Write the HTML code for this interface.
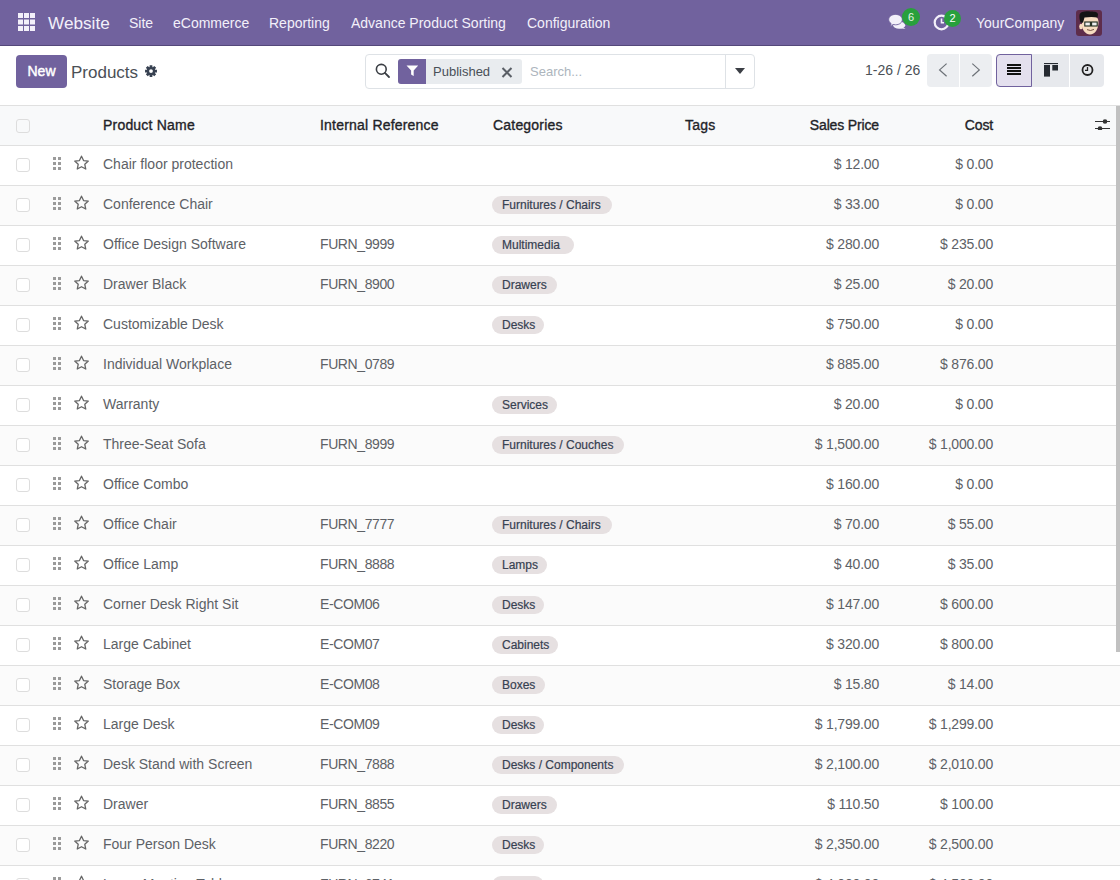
<!DOCTYPE html>
<html><head><meta charset="utf-8">
<style>
*{box-sizing:border-box;margin:0;padding:0}
html,body{width:1120px;height:880px;overflow:hidden;background:#fff;font-family:"Liberation Sans",sans-serif;}
.abs{position:absolute}
#nav{position:absolute;left:0;top:0;width:1120px;height:46px;background:#71629e;border-bottom:1px solid #54487a}
#nav .t{position:absolute;color:#f3f0fa;font-size:14px;line-height:16px;top:15px;white-space:nowrap}
#cp{position:absolute;left:0;top:46px;width:1120px;height:59px;background:#fff}
#list{position:absolute;left:0;top:105px;width:1120px;height:775px}
.row{position:absolute;left:0;width:1120px;height:41px;border-top:1px solid #e0e0e0}
.row .c{position:absolute;top:-1px;line-height:39px;font-size:14px;color:#5d6166;white-space:nowrap}
.hd{background:#f8f9fa}
.hd .c{top:0}
.hd .c{color:#1f2328;-webkit-text-stroke:0.35px #1f2328;letter-spacing:0.2px}
.r{text-align:right;letter-spacing:-0.2px}
.ref{letter-spacing:-0.4px}
.hd .r{letter-spacing:-0.15px}
.odd{background:#fbfbfb}
.cb{position:absolute;left:16px;top:12px;width:14px;height:14px;border:1px solid #dddddd;border-radius:3px;background:#fff}
.hd .cb{top:13px;background:transparent}
.hdl{position:absolute;left:53px;top:11px}
.star{position:absolute;left:73px;top:9.3px}
.badge{position:absolute;top:10px;height:18px;line-height:19px;font-size:12px;padding:0 0 0 10px;border-radius:9px;background:#e6e0e1;color:#374151;-webkit-text-stroke:0.2px #374151;white-space:nowrap}
#sb{position:absolute;left:1116px;top:106px;width:4px;height:546px;background:#c1c1c1}
</style></head>
<body>
<div id="nav">
  <svg class="abs" style="left:18px;top:13px" width="17" height="18" viewBox="0 0 17 18">
    <g fill="#f3f0fa">
      <rect x="0" y="0" width="5" height="5"/><rect x="6" y="0" width="5" height="5"/><rect x="12" y="0" width="5" height="5"/>
      <rect x="0" y="6.5" width="5" height="5"/><rect x="6" y="6.5" width="5" height="5"/><rect x="12" y="6.5" width="5" height="5"/>
      <rect x="0" y="13" width="5" height="5"/><rect x="6" y="13" width="5" height="5"/><rect x="12" y="13" width="5" height="5"/>
    </g>
  </svg>
  <div class="t" style="left:48px;top:13px;font-size:17.2px;line-height:20px">Website</div>
  <div class="t" style="left:129px">Site</div>
  <div class="t" style="left:173px">eCommerce</div>
  <div class="t" style="left:269px">Reporting</div>
  <div class="t" style="left:351px">Advance Product Sorting</div>
  <div class="t" style="left:527px">Configuration</div>
  <!-- chat icon -->
  <svg class="abs" style="left:884px;top:6px" width="24" height="26" viewBox="0 0 24 26">
    <g fill="#f3f0fa">
      <ellipse cx="15.2" cy="19.2" rx="6" ry="3.6"/>
      <path d="M18 20.5 L21.5 23 L15 22 Z"/>
    </g>
    <g fill="#f3f0fa" stroke="#71629e" stroke-width="0.9">
      <path d="M11.5 8.4 C15.4 8.4 18.3 10.6 18.3 13.6 C18.3 16.6 15.4 18.8 11.5 18.8 C10.6 18.8 9.8 18.7 9 18.5 L6.5 20.8 L7.1 17.6 C5.6 16.6 4.7 15.2 4.7 13.6 C4.7 10.6 7.6 8.4 11.5 8.4 Z"/>
    </g>
  </svg>
  <div class="abs" style="left:902px;top:8px;width:18px;height:18px;border-radius:50%;background:#28a03c;color:#e8f5e9;font-size:11px;line-height:18px;text-align:center">6</div>
  <!-- activity icon -->
  <svg class="abs" style="left:933px;top:13px" width="18" height="18" viewBox="0 0 18 18">
    <circle cx="8.5" cy="9.5" r="6.8" fill="none" stroke="#f3f0fa" stroke-width="2.2"/>
    <path d="M8.5 5.5 V9.8 H11" fill="none" stroke="#f3f0fa" stroke-width="1.6"/>
  </svg>
  <div class="abs" style="left:944px;top:10px;width:17px;height:17px;border-radius:50%;background:#28a03c;color:#fff;font-size:11px;line-height:17px;text-align:center">2</div>
  <div class="t" style="left:976px">YourCompany</div>
  <!-- avatar -->
  <svg class="abs" style="left:1076px;top:10px" width="26" height="26" viewBox="0 0 26 26">
    <rect x="0" y="0" width="26" height="26" rx="3" fill="#5e2d4b"/>
    <path d="M6 9 C6 6 9 5.5 14 5.8 C19 5.5 22.5 7 22.5 12 C22.5 19 19 24.5 14 24.5 C9.5 24.5 6.5 20 6 16 Z" fill="#f7dcc0"/>
    <ellipse cx="5" cy="16.5" rx="1.8" ry="2.8" fill="#f7dcc0"/>
    <path d="M3.5 5 C4 2 8 1.2 14 1.4 C19 1.3 22 2 22 4.5 L21.5 7.5 C18 6.8 13 6.8 8.5 7.5 L7 12.8 L4.5 12.5 C3.5 10 3.3 7 3.5 5 Z" fill="#141414"/>
    <rect x="8.8" y="12" width="5.6" height="4" fill="#eee" stroke="#1d2a1d" stroke-width="1.1"/>
    <rect x="15.6" y="12" width="5.6" height="4" fill="#eee" stroke="#1d2a1d" stroke-width="1.1"/>
    <path d="M11 19.6 Q14.5 21.5 18 19.4" fill="none" stroke="#6b4a3a" stroke-width="0.9"/>
  </svg>
</div>
<div id="cp">
  <div class="abs" style="left:16px;top:9px;width:51px;height:33px;background:#71629e;border-radius:4px;color:#fff;font-size:14px;-webkit-text-stroke:0.45px #fff;line-height:33px;text-align:center">New</div>
  <div class="abs" style="left:71px;top:16px;font-size:17px;line-height:22px;color:#4b5056">Products</div>
  <svg class="abs" style="left:144px;top:18px" width="14" height="14" viewBox="0 0 14 14">
    <path fill="#374151" fill-rule="evenodd" d="M5.57 3.05 L5.67 1.15 L8.33 1.15 L8.43 3.05 L8.85 3.22 L10.27 1.95 L12.15 3.83 L10.88 5.25 L11.05 5.67 L12.95 5.77 L12.95 8.43 L11.05 8.53 L10.88 8.95 L12.15 10.37 L10.27 12.25 L8.85 10.98 L8.43 11.15 L8.33 13.05 L5.67 13.05 L5.57 11.15 L5.15 10.98 L3.73 12.25 L1.85 10.37 L3.12 8.95 L2.95 8.53 L1.05 8.43 L1.05 5.77 L2.95 5.67 L3.12 5.25 L1.85 3.83 L3.73 1.95 L5.15 3.22 Z M8.9 7.1 A1.9 1.9 0 1 0 5.1 7.1 A1.9 1.9 0 1 0 8.9 7.1 Z"/>
  </svg>
  <!-- search box -->
  <div class="abs" style="left:365px;top:8px;width:390px;height:35px;border:1px solid #dee2e6;border-radius:4px"></div>
  <div class="abs" style="left:725px;top:9px;width:1px;height:33px;background:#dee2e6"></div>
  <svg class="abs" style="left:375px;top:17.4px" width="16" height="16" viewBox="0 0 16 16">
    <circle cx="6.3" cy="6.3" r="4.9" fill="none" stroke="#3b3f45" stroke-width="1.6"/>
    <path d="M9.9 9.9 L14 14" stroke="#3b3f45" stroke-width="1.8" stroke-linecap="round"/>
  </svg>
  <div class="abs" style="left:398px;top:13px;width:124px;height:25px;background:#e9ecef;border-radius:3px"></div>
  <div class="abs" style="left:398px;top:13px;width:28px;height:25px;background:#71629e;border-radius:3px 0 0 3px"></div>
  <svg class="abs" style="left:405.7px;top:18.6px" width="12.8" height="11.6" viewBox="0 0 12 11.5" preserveAspectRatio="none">
    <path d="M0.5 0.5 H11.5 L7.2 5.5 V11 L4.8 9.5 V5.5 Z" fill="#fff"/>
  </svg>
  <div class="abs" style="left:433px;top:17px;font-size:13px;line-height:17px;color:#495057">Published</div>
  <svg class="abs" style="left:501px;top:20.8px" width="12" height="11" viewBox="0 0 12 11">
    <path d="M1.5 1 L10.5 10 M10.5 1 L1.5 10" stroke="#5a5f66" stroke-width="2"/>
  </svg>
  <div class="abs" style="left:530px;top:17px;font-size:13px;line-height:17px;color:#adb5bd">Search...</div>
  <svg class="abs" style="left:735px;top:22px" width="10" height="6" viewBox="0 0 10 6">
    <path d="M0 0 H10 L5 6 Z" fill="#3b3f45"/>
  </svg>
  <!-- pager -->
  <div class="abs" style="left:865px;top:15px;font-size:14px;line-height:18px;color:#4b5056">1-26 / 26</div>
  <div class="abs" style="left:927px;top:8px;width:65px;height:33px;background:#eceef1;border-radius:4px"></div>
  <div class="abs" style="left:959px;top:8px;width:1px;height:33px;background:#fff"></div>
  <svg class="abs" style="left:937px;top:17px" width="13" height="15" viewBox="0 0 13 15">
    <path d="M9.6 0.6 L2.6 6.9 L9.6 13.2" fill="none" stroke="#6c7177" stroke-width="1.2"/>
  </svg>
  <svg class="abs" style="left:969px;top:17px" width="13" height="15" viewBox="0 0 13 15">
    <path d="M3.3 0.6 L10.3 6.9 L3.3 13.2" fill="none" stroke="#6c7177" stroke-width="1.2"/>
  </svg>
  <!-- view switcher -->
  <div class="abs" style="left:996px;top:8px;width:108px;height:33px;background:#e7e9ed;border-radius:4px"></div>
  <div class="abs" style="left:996px;top:8px;width:36px;height:33px;background:#e4e0ee;border:1px solid #71629e;border-radius:4px 0 0 4px"></div>
  <div class="abs" style="left:1069px;top:8px;width:1px;height:33px;background:#fff"></div>
  <svg class="abs" style="left:1007px;top:18px" width="14" height="11" viewBox="0 0 14 11">
    <g fill="#111"><rect x="0" y="0" width="14" height="2"/><rect x="0" y="3" width="14" height="2"/><rect x="0" y="6" width="14" height="2"/><rect x="0" y="9" width="14" height="2"/></g>
  </svg>
  <svg class="abs" style="left:1044px;top:17px" width="14" height="14" viewBox="0 0 14 14">
    <g fill="#252a31"><rect x="0" y="0" width="14" height="1.1"/><rect x="0" y="2" width="6" height="11.6"/><rect x="8.3" y="2" width="5.7" height="5.5"/></g>
  </svg>
  <svg class="abs" style="left:1081px;top:18px" width="13" height="12" viewBox="0 0 13 12">
    <circle cx="6.5" cy="6" r="5" fill="none" stroke="#222" stroke-width="1.8"/>
    <path d="M6.5 3 V6.3 H4" fill="none" stroke="#222" stroke-width="1.3"/>
  </svg>
</div>
<div id="list">
  <div class="row hd" style="top:0">
    <div class="cb"></div>
    <div class="c" style="left:103px">Product Name</div>
    <div class="c" style="left:320px">Internal Reference</div>
    <div class="c" style="left:493px">Categories</div>
    <div class="c" style="left:685px">Tags</div>
    <div class="c r" style="right:241px">Sales Price</div>
    <div class="c r" style="right:127px">Cost</div>
    <svg class="abs" style="left:1094px;top:13px" width="17" height="11" viewBox="0 0 17 11">
      <path d="M1 2.5 H16 M1 9.5 H16" stroke="#333" stroke-width="1.1"/>
      <circle cx="11" cy="2.5" r="2.3" fill="#333"/><circle cx="6" cy="9.5" r="2.3" fill="#333"/>
    </svg>
  </div>
<div class="row" style="top:40px"><div class="cb"></div><svg class="hdl" width="9" height="13" viewBox="0 0 9 13"><g fill="#9b9b9b"><rect x="0" y="0" width="3" height="3"/><rect x="5" y="0" width="3" height="3"/><rect x="0" y="5" width="3" height="3"/><rect x="5" y="5" width="3" height="3"/><rect x="0" y="10" width="3" height="3"/><rect x="5" y="10" width="3" height="3"/></g></svg><svg class="star" width="17" height="16" viewBox="0 0 17 16"><path d="M8.5 1.2 L10.55 5.55 L15.3 6.1 L11.8 9.35 L12.75 14.05 L8.5 11.7 L4.25 14.05 L5.2 9.35 L1.7 6.1 L6.45 5.55 Z" fill="none" stroke="#666" stroke-width="1.3" stroke-linejoin="round"/></svg><div class="c" style="left:103px">Chair floor protection</div><div class="c r" style="right:241px">$ 12.00</div><div class="c r" style="right:127px">$ 0.00</div></div>
<div class="row odd" style="top:80px"><div class="cb"></div><svg class="hdl" width="9" height="13" viewBox="0 0 9 13"><g fill="#9b9b9b"><rect x="0" y="0" width="3" height="3"/><rect x="5" y="0" width="3" height="3"/><rect x="0" y="5" width="3" height="3"/><rect x="5" y="5" width="3" height="3"/><rect x="0" y="10" width="3" height="3"/><rect x="5" y="10" width="3" height="3"/></g></svg><svg class="star" width="17" height="16" viewBox="0 0 17 16"><path d="M8.5 1.2 L10.55 5.55 L15.3 6.1 L11.8 9.35 L12.75 14.05 L8.5 11.7 L4.25 14.05 L5.2 9.35 L1.7 6.1 L6.45 5.55 Z" fill="none" stroke="#666" stroke-width="1.3" stroke-linejoin="round"/></svg><div class="c" style="left:103px">Conference Chair</div><div class="badge" style="left:492px;width:120px">Furnitures / Chairs</div><div class="c r" style="right:241px">$ 33.00</div><div class="c r" style="right:127px">$ 0.00</div></div>
<div class="row" style="top:120px"><div class="cb"></div><svg class="hdl" width="9" height="13" viewBox="0 0 9 13"><g fill="#9b9b9b"><rect x="0" y="0" width="3" height="3"/><rect x="5" y="0" width="3" height="3"/><rect x="0" y="5" width="3" height="3"/><rect x="5" y="5" width="3" height="3"/><rect x="0" y="10" width="3" height="3"/><rect x="5" y="10" width="3" height="3"/></g></svg><svg class="star" width="17" height="16" viewBox="0 0 17 16"><path d="M8.5 1.2 L10.55 5.55 L15.3 6.1 L11.8 9.35 L12.75 14.05 L8.5 11.7 L4.25 14.05 L5.2 9.35 L1.7 6.1 L6.45 5.55 Z" fill="none" stroke="#666" stroke-width="1.3" stroke-linejoin="round"/></svg><div class="c" style="left:103px">Office Design Software</div><div class="c ref" style="left:320px">FURN_9999</div><div class="badge" style="left:492px;width:82px">Multimedia</div><div class="c r" style="right:241px">$ 280.00</div><div class="c r" style="right:127px">$ 235.00</div></div>
<div class="row odd" style="top:160px"><div class="cb"></div><svg class="hdl" width="9" height="13" viewBox="0 0 9 13"><g fill="#9b9b9b"><rect x="0" y="0" width="3" height="3"/><rect x="5" y="0" width="3" height="3"/><rect x="0" y="5" width="3" height="3"/><rect x="5" y="5" width="3" height="3"/><rect x="0" y="10" width="3" height="3"/><rect x="5" y="10" width="3" height="3"/></g></svg><svg class="star" width="17" height="16" viewBox="0 0 17 16"><path d="M8.5 1.2 L10.55 5.55 L15.3 6.1 L11.8 9.35 L12.75 14.05 L8.5 11.7 L4.25 14.05 L5.2 9.35 L1.7 6.1 L6.45 5.55 Z" fill="none" stroke="#666" stroke-width="1.3" stroke-linejoin="round"/></svg><div class="c" style="left:103px">Drawer Black</div><div class="c ref" style="left:320px">FURN_8900</div><div class="badge" style="left:492px;width:65px">Drawers</div><div class="c r" style="right:241px">$ 25.00</div><div class="c r" style="right:127px">$ 20.00</div></div>
<div class="row" style="top:200px"><div class="cb"></div><svg class="hdl" width="9" height="13" viewBox="0 0 9 13"><g fill="#9b9b9b"><rect x="0" y="0" width="3" height="3"/><rect x="5" y="0" width="3" height="3"/><rect x="0" y="5" width="3" height="3"/><rect x="5" y="5" width="3" height="3"/><rect x="0" y="10" width="3" height="3"/><rect x="5" y="10" width="3" height="3"/></g></svg><svg class="star" width="17" height="16" viewBox="0 0 17 16"><path d="M8.5 1.2 L10.55 5.55 L15.3 6.1 L11.8 9.35 L12.75 14.05 L8.5 11.7 L4.25 14.05 L5.2 9.35 L1.7 6.1 L6.45 5.55 Z" fill="none" stroke="#666" stroke-width="1.3" stroke-linejoin="round"/></svg><div class="c" style="left:103px">Customizable Desk</div><div class="badge" style="left:492px;width:52px">Desks</div><div class="c r" style="right:241px">$ 750.00</div><div class="c r" style="right:127px">$ 0.00</div></div>
<div class="row odd" style="top:240px"><div class="cb"></div><svg class="hdl" width="9" height="13" viewBox="0 0 9 13"><g fill="#9b9b9b"><rect x="0" y="0" width="3" height="3"/><rect x="5" y="0" width="3" height="3"/><rect x="0" y="5" width="3" height="3"/><rect x="5" y="5" width="3" height="3"/><rect x="0" y="10" width="3" height="3"/><rect x="5" y="10" width="3" height="3"/></g></svg><svg class="star" width="17" height="16" viewBox="0 0 17 16"><path d="M8.5 1.2 L10.55 5.55 L15.3 6.1 L11.8 9.35 L12.75 14.05 L8.5 11.7 L4.25 14.05 L5.2 9.35 L1.7 6.1 L6.45 5.55 Z" fill="none" stroke="#666" stroke-width="1.3" stroke-linejoin="round"/></svg><div class="c" style="left:103px">Individual Workplace</div><div class="c ref" style="left:320px">FURN_0789</div><div class="c r" style="right:241px">$ 885.00</div><div class="c r" style="right:127px">$ 876.00</div></div>
<div class="row" style="top:280px"><div class="cb"></div><svg class="hdl" width="9" height="13" viewBox="0 0 9 13"><g fill="#9b9b9b"><rect x="0" y="0" width="3" height="3"/><rect x="5" y="0" width="3" height="3"/><rect x="0" y="5" width="3" height="3"/><rect x="5" y="5" width="3" height="3"/><rect x="0" y="10" width="3" height="3"/><rect x="5" y="10" width="3" height="3"/></g></svg><svg class="star" width="17" height="16" viewBox="0 0 17 16"><path d="M8.5 1.2 L10.55 5.55 L15.3 6.1 L11.8 9.35 L12.75 14.05 L8.5 11.7 L4.25 14.05 L5.2 9.35 L1.7 6.1 L6.45 5.55 Z" fill="none" stroke="#666" stroke-width="1.3" stroke-linejoin="round"/></svg><div class="c" style="left:103px">Warranty</div><div class="badge" style="left:492px;width:65px">Services</div><div class="c r" style="right:241px">$ 20.00</div><div class="c r" style="right:127px">$ 0.00</div></div>
<div class="row odd" style="top:320px"><div class="cb"></div><svg class="hdl" width="9" height="13" viewBox="0 0 9 13"><g fill="#9b9b9b"><rect x="0" y="0" width="3" height="3"/><rect x="5" y="0" width="3" height="3"/><rect x="0" y="5" width="3" height="3"/><rect x="5" y="5" width="3" height="3"/><rect x="0" y="10" width="3" height="3"/><rect x="5" y="10" width="3" height="3"/></g></svg><svg class="star" width="17" height="16" viewBox="0 0 17 16"><path d="M8.5 1.2 L10.55 5.55 L15.3 6.1 L11.8 9.35 L12.75 14.05 L8.5 11.7 L4.25 14.05 L5.2 9.35 L1.7 6.1 L6.45 5.55 Z" fill="none" stroke="#666" stroke-width="1.3" stroke-linejoin="round"/></svg><div class="c" style="left:103px">Three-Seat Sofa</div><div class="c ref" style="left:320px">FURN_8999</div><div class="badge" style="left:492px;width:132px">Furnitures / Couches</div><div class="c r" style="right:241px">$ 1,500.00</div><div class="c r" style="right:127px">$ 1,000.00</div></div>
<div class="row" style="top:360px"><div class="cb"></div><svg class="hdl" width="9" height="13" viewBox="0 0 9 13"><g fill="#9b9b9b"><rect x="0" y="0" width="3" height="3"/><rect x="5" y="0" width="3" height="3"/><rect x="0" y="5" width="3" height="3"/><rect x="5" y="5" width="3" height="3"/><rect x="0" y="10" width="3" height="3"/><rect x="5" y="10" width="3" height="3"/></g></svg><svg class="star" width="17" height="16" viewBox="0 0 17 16"><path d="M8.5 1.2 L10.55 5.55 L15.3 6.1 L11.8 9.35 L12.75 14.05 L8.5 11.7 L4.25 14.05 L5.2 9.35 L1.7 6.1 L6.45 5.55 Z" fill="none" stroke="#666" stroke-width="1.3" stroke-linejoin="round"/></svg><div class="c" style="left:103px">Office Combo</div><div class="c r" style="right:241px">$ 160.00</div><div class="c r" style="right:127px">$ 0.00</div></div>
<div class="row odd" style="top:400px"><div class="cb"></div><svg class="hdl" width="9" height="13" viewBox="0 0 9 13"><g fill="#9b9b9b"><rect x="0" y="0" width="3" height="3"/><rect x="5" y="0" width="3" height="3"/><rect x="0" y="5" width="3" height="3"/><rect x="5" y="5" width="3" height="3"/><rect x="0" y="10" width="3" height="3"/><rect x="5" y="10" width="3" height="3"/></g></svg><svg class="star" width="17" height="16" viewBox="0 0 17 16"><path d="M8.5 1.2 L10.55 5.55 L15.3 6.1 L11.8 9.35 L12.75 14.05 L8.5 11.7 L4.25 14.05 L5.2 9.35 L1.7 6.1 L6.45 5.55 Z" fill="none" stroke="#666" stroke-width="1.3" stroke-linejoin="round"/></svg><div class="c" style="left:103px">Office Chair</div><div class="c ref" style="left:320px">FURN_7777</div><div class="badge" style="left:492px;width:120px">Furnitures / Chairs</div><div class="c r" style="right:241px">$ 70.00</div><div class="c r" style="right:127px">$ 55.00</div></div>
<div class="row" style="top:440px"><div class="cb"></div><svg class="hdl" width="9" height="13" viewBox="0 0 9 13"><g fill="#9b9b9b"><rect x="0" y="0" width="3" height="3"/><rect x="5" y="0" width="3" height="3"/><rect x="0" y="5" width="3" height="3"/><rect x="5" y="5" width="3" height="3"/><rect x="0" y="10" width="3" height="3"/><rect x="5" y="10" width="3" height="3"/></g></svg><svg class="star" width="17" height="16" viewBox="0 0 17 16"><path d="M8.5 1.2 L10.55 5.55 L15.3 6.1 L11.8 9.35 L12.75 14.05 L8.5 11.7 L4.25 14.05 L5.2 9.35 L1.7 6.1 L6.45 5.55 Z" fill="none" stroke="#666" stroke-width="1.3" stroke-linejoin="round"/></svg><div class="c" style="left:103px">Office Lamp</div><div class="c ref" style="left:320px">FURN_8888</div><div class="badge" style="left:492px;width:55px">Lamps</div><div class="c r" style="right:241px">$ 40.00</div><div class="c r" style="right:127px">$ 35.00</div></div>
<div class="row odd" style="top:480px"><div class="cb"></div><svg class="hdl" width="9" height="13" viewBox="0 0 9 13"><g fill="#9b9b9b"><rect x="0" y="0" width="3" height="3"/><rect x="5" y="0" width="3" height="3"/><rect x="0" y="5" width="3" height="3"/><rect x="5" y="5" width="3" height="3"/><rect x="0" y="10" width="3" height="3"/><rect x="5" y="10" width="3" height="3"/></g></svg><svg class="star" width="17" height="16" viewBox="0 0 17 16"><path d="M8.5 1.2 L10.55 5.55 L15.3 6.1 L11.8 9.35 L12.75 14.05 L8.5 11.7 L4.25 14.05 L5.2 9.35 L1.7 6.1 L6.45 5.55 Z" fill="none" stroke="#666" stroke-width="1.3" stroke-linejoin="round"/></svg><div class="c" style="left:103px">Corner Desk Right Sit</div><div class="c ref" style="left:320px">E-COM06</div><div class="badge" style="left:492px;width:52px">Desks</div><div class="c r" style="right:241px">$ 147.00</div><div class="c r" style="right:127px">$ 600.00</div></div>
<div class="row" style="top:520px"><div class="cb"></div><svg class="hdl" width="9" height="13" viewBox="0 0 9 13"><g fill="#9b9b9b"><rect x="0" y="0" width="3" height="3"/><rect x="5" y="0" width="3" height="3"/><rect x="0" y="5" width="3" height="3"/><rect x="5" y="5" width="3" height="3"/><rect x="0" y="10" width="3" height="3"/><rect x="5" y="10" width="3" height="3"/></g></svg><svg class="star" width="17" height="16" viewBox="0 0 17 16"><path d="M8.5 1.2 L10.55 5.55 L15.3 6.1 L11.8 9.35 L12.75 14.05 L8.5 11.7 L4.25 14.05 L5.2 9.35 L1.7 6.1 L6.45 5.55 Z" fill="none" stroke="#666" stroke-width="1.3" stroke-linejoin="round"/></svg><div class="c" style="left:103px">Large Cabinet</div><div class="c ref" style="left:320px">E-COM07</div><div class="badge" style="left:492px;width:66px">Cabinets</div><div class="c r" style="right:241px">$ 320.00</div><div class="c r" style="right:127px">$ 800.00</div></div>
<div class="row odd" style="top:560px"><div class="cb"></div><svg class="hdl" width="9" height="13" viewBox="0 0 9 13"><g fill="#9b9b9b"><rect x="0" y="0" width="3" height="3"/><rect x="5" y="0" width="3" height="3"/><rect x="0" y="5" width="3" height="3"/><rect x="5" y="5" width="3" height="3"/><rect x="0" y="10" width="3" height="3"/><rect x="5" y="10" width="3" height="3"/></g></svg><svg class="star" width="17" height="16" viewBox="0 0 17 16"><path d="M8.5 1.2 L10.55 5.55 L15.3 6.1 L11.8 9.35 L12.75 14.05 L8.5 11.7 L4.25 14.05 L5.2 9.35 L1.7 6.1 L6.45 5.55 Z" fill="none" stroke="#666" stroke-width="1.3" stroke-linejoin="round"/></svg><div class="c" style="left:103px">Storage Box</div><div class="c ref" style="left:320px">E-COM08</div><div class="badge" style="left:492px;width:53px">Boxes</div><div class="c r" style="right:241px">$ 15.80</div><div class="c r" style="right:127px">$ 14.00</div></div>
<div class="row" style="top:600px"><div class="cb"></div><svg class="hdl" width="9" height="13" viewBox="0 0 9 13"><g fill="#9b9b9b"><rect x="0" y="0" width="3" height="3"/><rect x="5" y="0" width="3" height="3"/><rect x="0" y="5" width="3" height="3"/><rect x="5" y="5" width="3" height="3"/><rect x="0" y="10" width="3" height="3"/><rect x="5" y="10" width="3" height="3"/></g></svg><svg class="star" width="17" height="16" viewBox="0 0 17 16"><path d="M8.5 1.2 L10.55 5.55 L15.3 6.1 L11.8 9.35 L12.75 14.05 L8.5 11.7 L4.25 14.05 L5.2 9.35 L1.7 6.1 L6.45 5.55 Z" fill="none" stroke="#666" stroke-width="1.3" stroke-linejoin="round"/></svg><div class="c" style="left:103px">Large Desk</div><div class="c ref" style="left:320px">E-COM09</div><div class="badge" style="left:492px;width:52px">Desks</div><div class="c r" style="right:241px">$ 1,799.00</div><div class="c r" style="right:127px">$ 1,299.00</div></div>
<div class="row odd" style="top:640px"><div class="cb"></div><svg class="hdl" width="9" height="13" viewBox="0 0 9 13"><g fill="#9b9b9b"><rect x="0" y="0" width="3" height="3"/><rect x="5" y="0" width="3" height="3"/><rect x="0" y="5" width="3" height="3"/><rect x="5" y="5" width="3" height="3"/><rect x="0" y="10" width="3" height="3"/><rect x="5" y="10" width="3" height="3"/></g></svg><svg class="star" width="17" height="16" viewBox="0 0 17 16"><path d="M8.5 1.2 L10.55 5.55 L15.3 6.1 L11.8 9.35 L12.75 14.05 L8.5 11.7 L4.25 14.05 L5.2 9.35 L1.7 6.1 L6.45 5.55 Z" fill="none" stroke="#666" stroke-width="1.3" stroke-linejoin="round"/></svg><div class="c" style="left:103px">Desk Stand with Screen</div><div class="c ref" style="left:320px">FURN_7888</div><div class="badge" style="left:492px;width:132px">Desks / Components</div><div class="c r" style="right:241px">$ 2,100.00</div><div class="c r" style="right:127px">$ 2,010.00</div></div>
<div class="row" style="top:680px"><div class="cb"></div><svg class="hdl" width="9" height="13" viewBox="0 0 9 13"><g fill="#9b9b9b"><rect x="0" y="0" width="3" height="3"/><rect x="5" y="0" width="3" height="3"/><rect x="0" y="5" width="3" height="3"/><rect x="5" y="5" width="3" height="3"/><rect x="0" y="10" width="3" height="3"/><rect x="5" y="10" width="3" height="3"/></g></svg><svg class="star" width="17" height="16" viewBox="0 0 17 16"><path d="M8.5 1.2 L10.55 5.55 L15.3 6.1 L11.8 9.35 L12.75 14.05 L8.5 11.7 L4.25 14.05 L5.2 9.35 L1.7 6.1 L6.45 5.55 Z" fill="none" stroke="#666" stroke-width="1.3" stroke-linejoin="round"/></svg><div class="c" style="left:103px">Drawer</div><div class="c ref" style="left:320px">FURN_8855</div><div class="badge" style="left:492px;width:65px">Drawers</div><div class="c r" style="right:241px">$ 110.50</div><div class="c r" style="right:127px">$ 100.00</div></div>
<div class="row odd" style="top:720px"><div class="cb"></div><svg class="hdl" width="9" height="13" viewBox="0 0 9 13"><g fill="#9b9b9b"><rect x="0" y="0" width="3" height="3"/><rect x="5" y="0" width="3" height="3"/><rect x="0" y="5" width="3" height="3"/><rect x="5" y="5" width="3" height="3"/><rect x="0" y="10" width="3" height="3"/><rect x="5" y="10" width="3" height="3"/></g></svg><svg class="star" width="17" height="16" viewBox="0 0 17 16"><path d="M8.5 1.2 L10.55 5.55 L15.3 6.1 L11.8 9.35 L12.75 14.05 L8.5 11.7 L4.25 14.05 L5.2 9.35 L1.7 6.1 L6.45 5.55 Z" fill="none" stroke="#666" stroke-width="1.3" stroke-linejoin="round"/></svg><div class="c" style="left:103px">Four Person Desk</div><div class="c ref" style="left:320px">FURN_8220</div><div class="badge" style="left:492px;width:52px">Desks</div><div class="c r" style="right:241px">$ 2,350.00</div><div class="c r" style="right:127px">$ 2,500.00</div></div>
<div class="row" style="top:760px"><div class="cb"></div><svg class="hdl" width="9" height="13" viewBox="0 0 9 13"><g fill="#9b9b9b"><rect x="0" y="0" width="3" height="3"/><rect x="5" y="0" width="3" height="3"/><rect x="0" y="5" width="3" height="3"/><rect x="5" y="5" width="3" height="3"/><rect x="0" y="10" width="3" height="3"/><rect x="5" y="10" width="3" height="3"/></g></svg><svg class="star" width="17" height="16" viewBox="0 0 17 16"><path d="M8.5 1.2 L10.55 5.55 L15.3 6.1 L11.8 9.35 L12.75 14.05 L8.5 11.7 L4.25 14.05 L5.2 9.35 L1.7 6.1 L6.45 5.55 Z" fill="none" stroke="#666" stroke-width="1.3" stroke-linejoin="round"/></svg><div class="c" style="left:103px">Large Meeting Table</div><div class="c ref" style="left:320px">FURN_6741</div><div class="badge" style="left:492px;width:52px">Tables</div><div class="c r" style="right:241px">$ 4,000.00</div><div class="c r" style="right:127px">$ 4,500.00</div></div>
</div>
<div id="sb"></div>
</body></html>
